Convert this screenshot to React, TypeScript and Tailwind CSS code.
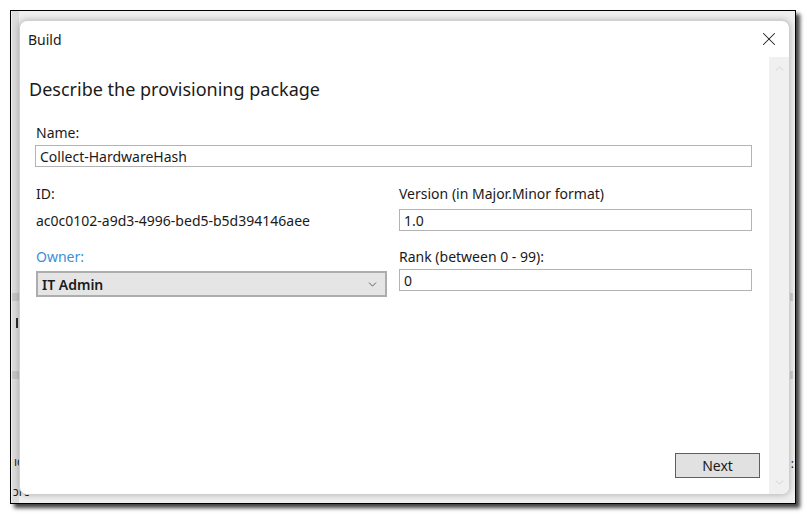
import { ChevronDown, ChevronUp, X } from "lucide-react";

const font = { fontFamily: '"Noto Sans", "Open Sans", sans-serif' };

function TextBox({ value, className = "" }: { value: string; className?: string }) {
  return (
    <div
      className={`flex h-[22px] items-center border border-[#b3b3b3] bg-white px-[4px] text-[14px] text-[#1a1a1a] ${className}`}
    >
      {value}
    </div>
  );
}

function Label({ children, className = "" }: { children: React.ReactNode; className?: string }) {
  return <div className={`h-[20px] text-[14px] leading-[20px] text-[#1a1a1a] ${className}`}>{children}</div>;
}

export default function App() {
  return (
    <div className="h-[515px] w-[807px] bg-white pl-[10px] pt-[10px]" style={font}>
      <div className="relative h-[494px] w-[786px] border border-black bg-[#efefef] shadow-[4px_4px_4px_rgba(0,0,0,0.75)]">
        {/* background window bits peeking out */}
        <div className="absolute left-[1px] top-0 h-full w-[7px] bg-[#dcdcdc]" />
        <div className="absolute left-[1px] top-[282px] h-[8px] w-[7px] bg-[#c4c4c4]" />
        <div className="absolute left-[1px] top-[360px] h-[8px] w-[7px] bg-[#c4c4c4]" />
        <div className="absolute left-[5px] top-[307px] h-[10px] w-[2px] bg-[#2b2b2b]" />
        <div className="absolute left-[3px] top-[444px] text-[12px] leading-[14px] text-[#222]">ıc</div>
        <div className="absolute left-[2px] top-[474px] text-[12px] leading-[14px] text-[#222]">ɔrc</div>
        <div className="absolute right-[2px] top-[282px] h-[8px] w-[5px] bg-[#cfcfcf]" />
        <div className="absolute right-[2px] top-[360px] h-[8px] w-[5px] bg-[#cfcfcf]" />
        <div className="absolute right-[1px] top-[446px] text-[12px] leading-[14px] text-[#222]">:</div>

        {/* dialog */}
        <div className="absolute left-[8px] top-[9px] flex h-[475px] w-[771px] flex-col overflow-hidden rounded-[8px] border border-[#cfcfcf] bg-white shadow-[0_0_6px_rgba(0,0,0,0.25)]">
          <div className="flex h-[36px] shrink-0 items-center justify-between pl-[8px] pr-[9px]">
            <span className="text-[14px] text-[#1a1a1a]">Build</span>
            <X size={22} strokeWidth={1.1} className="text-[#1a1a1a]" />
          </div>
          <div className="flex min-h-0 flex-1">
            <div className="relative flex-1 pl-[9px]">
              <div className="pt-[19px] text-[18px] leading-[26px] text-[#1a1a1a]">
                Describe the provisioning package
              </div>
              <div className="pl-[6px] pr-[17px]">
                <Label className="mt-[21px] pl-[1px]">Name:</Label>
                <TextBox value="Collect-HardwareHash" className="mt-[2px]" />
                <div className="mt-[17px] grid grid-cols-[352px_353px] gap-x-[12px]">
                  <Label className="pl-[1px]">ID:</Label>
                  <Label>Version (in Major.Minor format)</Label>
                  <div className="mt-[5px] flex h-[22px] items-center pl-[1px] text-[14px] text-[#1a1a1a]">
                    ac0c0102-a9d3-4996-bed5-b5d394146aee
                  </div>
                  <TextBox value="1.0" className="mt-[5px]" />
                  <Label className="mt-[16px] pl-[1px] text-[#3d8fd6]">Owner:</Label>
                  <Label className="mt-[16px]">Rank (between 0 - 99):</Label>
                  <div className="mt-[4px] ml-[1px] flex h-[26px] items-center justify-between border-2 border-[#adadad] bg-[#e5e5e5] pl-[4px] pr-[6px]">
                    <span className="text-[14px] font-semibold text-[#1a1a1a]">IT Admin</span>
                    <ChevronDown size={13} strokeWidth={1.5} className="text-[#444]" />
                  </div>
                  <TextBox value="0" className="mt-[2px]" />
                </div>
              </div>
              <div className="absolute bottom-[16px] right-[9px] flex h-[25px] w-[85px] items-center justify-center border border-[#0078d7] bg-[#e1e1e1] text-[14px] text-[#1a1a1a]">
                Next
              </div>
            </div>
            <div className="flex w-[20px] shrink-0 flex-col items-center justify-between bg-[#f0f0f0] py-[5px]">
              <ChevronUp size={13} strokeWidth={1.5} className="text-[#cdcdcd]" />
              <ChevronDown size={13} strokeWidth={1.5} className="text-[#cdcdcd]" />
            </div>
          </div>
        </div>
      </div>
    </div>
  );
}
